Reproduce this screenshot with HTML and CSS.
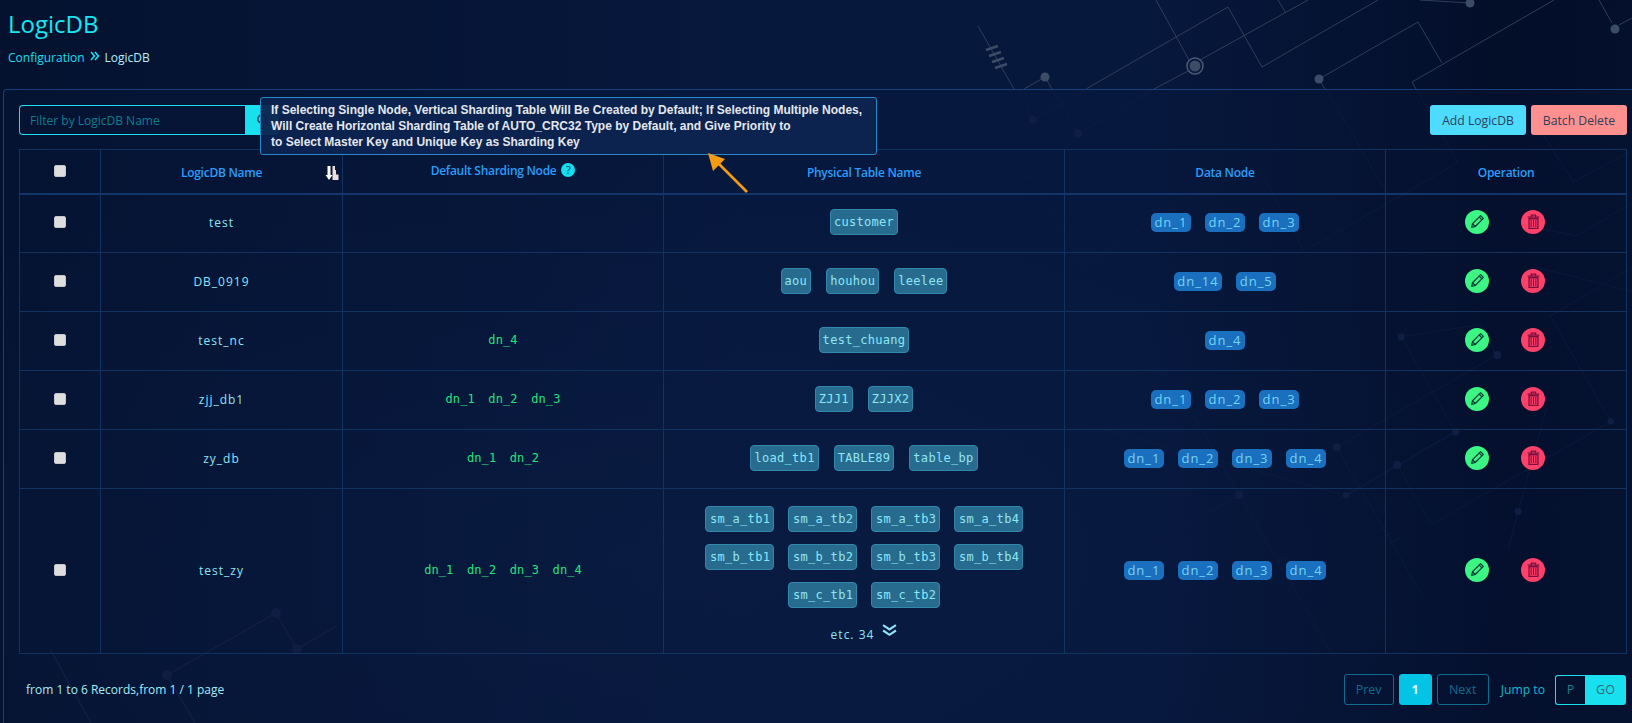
FILE: index.html
```html
<!DOCTYPE html>
<html lang="en">
<head>
<meta charset="utf-8">
<title>LogicDB</title>
<link rel="stylesheet" href="styles.css">
</head>
<body>
<svg class="backdrop" viewBox="0 0 1632 723" aria-hidden="true">
  <g class="wire">
    <path d="M978 26L1014 89M1045 77L1024 89M1045 77L1052 89"/>
    <path d="M1086 89L1228 7L1262 67L1378 0"/>
    <path d="M1156 0L1189 60M1200 60L1308 0M1190 70L1154 89"/>
    <path d="M1278 0L1286 13M1319 79L1418 22L1442 63M1319 79L1325 89"/>
    <path d="M1554 0L1412 82L1416 89M1470 3L1420 0M1599 0L1612 23M1619 25L1632 18"/>
  </g>
  <g class="solder">
    <circle cx="1045" cy="77" r="4.5"/><circle cx="1195" cy="66" r="5.5"/><circle cx="1319" cy="79" r="4.5"/><circle cx="1470" cy="3" r="4.5"/><circle cx="1615" cy="29" r="4.5"/>
  </g>
  <circle class="ring" cx="1195" cy="66" r="8"/>
  <path class="coil" d="M986 50L998 46M989 56L1001 52M992 62L1004 58M995 68L1007 64"/>
  <g class="wire-faint" transform="translate(1000 90) scale(.4032)">
    <path d="M45 0L82 74L210 0M130 0L193 108L380 0M810 0L955 250M1035 0L1135 180M1340 100L1422 228L1568 150"/>
    <path d="M0 260L75 212L208 437L560 200M640 190L755 400L1135 180M1350 345L1428 362L1568 280M1330 440L1568 500"/>
    <path d="M995 612L1130 848L835 1020M995 612L1190 582L1233 657L835 886L1050 1260"/>
    <path d="M473 795L820 1395M593 1005L405 1110M250 840L858 1005L1140 840M985 930L1070 1078L1515 822L1365 560L1568 440"/>
    <path d="M1355 790L1285 1045L1260 1140"/>
    <path d="M945 1090L960 1082M955 1108L975 1096M965 1126L990 1112M685 1170L705 1158M695 1190L715 1178"/>
  </g>
  <g class="solder-faint" transform="translate(1000 90) scale(.4032)">
    <circle cx="82" cy="74" r="10"/><circle cx="193" cy="108" r="11"/><circle cx="995" cy="612" r="9"/><circle cx="1233" cy="657" r="10"/><circle cx="1130" cy="848" r="9"/><circle cx="835" cy="886" r="10"/><circle cx="593" cy="1005" r="10"/><circle cx="858" cy="1005" r="8"/><circle cx="985" cy="930" r="10"/><circle cx="1515" cy="822" r="8"/><circle cx="1285" cy="1045" r="9"/>
  </g>
  <g class="wire-faint"><path d="M167 675L276 613L297 649L337 626M50 649L91 723M167 675L195 723"/></g>
  <g class="solder-faint"><circle cx="276" cy="613" r="5"/><circle cx="297" cy="649" r="5"/><circle cx="167" cy="675" r="5"/></g>
</svg>

<svg class="defs" aria-hidden="true">
  <symbol id="pencil" viewBox="0 0 16 16"><path d="M2.500 13.500l.8-3.400 7.600-7.600 2.600 2.600-7.600 7.600zM3.300 10.100l2.600 2.600M9.600 3.800l2.600 2.600" fill="none" stroke="currentColor" stroke-width="1.100" stroke-linejoin="round"/></symbol>
  <symbol id="trash" viewBox="0 0 16 16"><path d="M2.500 3.800h11M6 3.600V2h4v1.600M3.800 5.400h8.400v9H3.800z" fill="none" stroke="currentColor" stroke-width="1.200"/><path d="M5.800 6.600v6.600M8 6.600v6.600M10.200 6.600v6.600" stroke="currentColor" stroke-width="1"/></symbol>
</svg>

<header class="page-head">
  <h1 class="page-title">LogicDB</h1>
  <nav class="crumbs">
    <a class="crumb-link">Configuration</a>
    <svg class="crumb-sep" viewBox="0 0 10 10"><path d="M1 1l3.400 4L1 9M5 1l3.400 4L5 9" fill="none" stroke="currentColor" stroke-width="1.600"/></svg>
    <span class="crumb-now">LogicDB</span>
  </nav>
</header>

<main class="panel">
  <div class="toolbar">
    <div class="search">
      <input class="search-input" placeholder="Filter by LogicDB Name">
      <button class="search-btn"><svg viewBox="0 0 14 14" class="search-icon"><circle cx="6" cy="6" r="4.200" fill="none" stroke="currentColor" stroke-width="1.700"/><path d="M9.200 9.200l3.600 3.600" stroke="currentColor" stroke-width="1.900"/></svg></button>
    </div>
    <div class="actions">
      <button class="btn btn-add">Add LogicDB</button>
      <button class="btn btn-del">Batch Delete</button>
    </div>
  </div>

  <table class="grid">
    <colgroup><col class="c-check"><col class="c-name"><col class="c-default"><col class="c-phys"><col class="c-node"><col class="c-op"></colgroup>
    <thead>
      <tr>
        <th><input type="checkbox" class="check"></th>
        <th class="th-sort">LogicDB Name
          <svg class="sort" viewBox="0 0 14 14"><path d="M2.500 0h3v9H7.500L4 14 .5 9h2z" fill="#fff"/><path d="M7.500 0h2.500v4H7.500zM7.500 4h3.500v4.500H7.500zM7.500 8.500H13.500V14H7.500z" fill="#ecdfe2"/></svg>
        </th>
        <th class="th-raise">Default Sharding Node <span class="help">?</span></th>
        <th>Physical Table Name</th>
        <th>Data Node</th>
        <th>Operation</th>
      </tr>
    </thead>
    <tbody>
      <tr>
        <td><input type="checkbox" class="check"></td><td class="name">test</td><td></td>
        <td><div class="tags"><span class="tbl">customer</span></div></td>
        <td><div class="nodes"><span class="dn">dn_1</span><span class="dn">dn_2</span><span class="dn">dn_3</span></div></td>
        <td><div class="ops"><span class="op op-edit"><svg><use href="#pencil"/></svg></span><span class="op op-del"><svg><use href="#trash"/></svg></span></div></td>
      </tr>
      <tr>
        <td><input type="checkbox" class="check"></td><td class="name">DB_0919</td><td></td>
        <td><div class="tags"><span class="tbl">aou</span><span class="tbl">houhou</span><span class="tbl">leelee</span></div></td>
        <td><div class="nodes"><span class="dn">dn_14</span><span class="dn">dn_5</span></div></td>
        <td><div class="ops"><span class="op op-edit"><svg><use href="#pencil"/></svg></span><span class="op op-del"><svg><use href="#trash"/></svg></span></div></td>
      </tr>
      <tr>
        <td><input type="checkbox" class="check"></td><td class="name">test_nc</td>
        <td><div class="defaults"><span>dn_4</span></div></td>
        <td><div class="tags"><span class="tbl">test_chuang</span></div></td>
        <td><div class="nodes"><span class="dn">dn_4</span></div></td>
        <td><div class="ops"><span class="op op-edit"><svg><use href="#pencil"/></svg></span><span class="op op-del"><svg><use href="#trash"/></svg></span></div></td>
      </tr>
      <tr>
        <td><input type="checkbox" class="check"></td><td class="name">zjj_db1</td>
        <td><div class="defaults"><span>dn_1</span><span>dn_2</span><span>dn_3</span></div></td>
        <td><div class="tags"><span class="tbl">ZJJ1</span><span class="tbl">ZJJX2</span></div></td>
        <td><div class="nodes"><span class="dn">dn_1</span><span class="dn">dn_2</span><span class="dn">dn_3</span></div></td>
        <td><div class="ops"><span class="op op-edit"><svg><use href="#pencil"/></svg></span><span class="op op-del"><svg><use href="#trash"/></svg></span></div></td>
      </tr>
      <tr>
        <td><input type="checkbox" class="check"></td><td class="name">zy_db</td>
        <td><div class="defaults"><span>dn_1</span><span>dn_2</span></div></td>
        <td><div class="tags"><span class="tbl">load_tb1</span><span class="tbl">TABLE89</span><span class="tbl">table_bp</span></div></td>
        <td><div class="nodes"><span class="dn">dn_1</span><span class="dn">dn_2</span><span class="dn">dn_3</span><span class="dn">dn_4</span></div></td>
        <td><div class="ops"><span class="op op-edit"><svg><use href="#pencil"/></svg></span><span class="op op-del"><svg><use href="#trash"/></svg></span></div></td>
      </tr>
      <tr>
        <td><input type="checkbox" class="check"></td><td class="name">test_zy</td>
        <td><div class="defaults"><span>dn_1</span><span>dn_2</span><span>dn_3</span><span>dn_4</span></div></td>
        <td class="td-many">
          <div class="tags tags-many">
            <span class="tbl">sm_a_tb1</span><span class="tbl">sm_a_tb2</span><span class="tbl">sm_a_tb3</span><span class="tbl">sm_a_tb4</span>
            <span class="tbl">sm_b_tb1</span><span class="tbl">sm_b_tb2</span><span class="tbl">sm_b_tb3</span><span class="tbl">sm_b_tb4</span>
            <span class="tbl">sm_c_tb1</span><span class="tbl">sm_c_tb2</span>
          </div>
          <div class="more">etc. 34 <svg class="more-icon" viewBox="0 0 14 12"><path d="M1 1l6 4 6-4M1 6l6 4 6-4" fill="none" stroke="currentColor" stroke-width="2"/></svg></div>
        </td>
        <td><div class="nodes"><span class="dn">dn_1</span><span class="dn">dn_2</span><span class="dn">dn_3</span><span class="dn">dn_4</span></div></td>
        <td><div class="ops"><span class="op op-edit"><svg><use href="#pencil"/></svg></span><span class="op op-del"><svg><use href="#trash"/></svg></span></div></td>
      </tr>
    </tbody>
  </table>

  <footer class="foot">
    <span class="records">from 1 to 6 Records,from 1 / 1 page</span>
    <div class="pager">
      <a class="pg pg-prev">Prev</a>
      <a class="pg pg-cur">1</a>
      <a class="pg pg-next">Next</a>
      <span class="jump">Jump to</span>
      <div class="goto"><span class="goto-p">P</span><span class="goto-btn">GO</span></div>
    </div>
  </footer>

  <div class="tooltip">If Selecting Single Node, Vertical Sharding Table Will Be Created by Default; If Selecting Multiple Nodes,<br>Will Create Horizontal Sharding Table of AUTO_CRC32 Type by Default, and Give Priority to<br>to Select Master Key and Unique Key as Sharding Key</div>
  <svg class="callout" viewBox="0 0 50 46"><path d="M42 39L12 9" stroke="#f39c12" stroke-width="2.600"/><path d="M3 0L20 6L8 18z" fill="#f39c12"/></svg>
</main>
</body>
</html>
```
FILE: styles.css
```css
* { box-sizing: border-box; }
html, body { margin: 0; height: 723px; overflow: hidden; }
body {
  position: relative;
  font-family: "Open Sans", "Noto Sans", sans-serif;
  font-size: 13px;
  color: #8fe3f5;
  background:
    radial-gradient(ellipse 900px 420px at 620px 560px, rgba(12, 30, 70, .45), rgba(12, 30, 70, 0) 100%),
    linear-gradient(90deg, #04122f 0%, #07183d 45%, #07183d 70%, #030e29 92%, #04102c 100%);
}
.backdrop { position: absolute; left: 0; top: 0; width: 1632px; height: 723px; }
.defs { position: absolute; width: 0; height: 0; }
.wire path { fill: none; stroke: #2f3e58; stroke-width: 1; }
.solder circle { fill: #3d4c66; }
.ring { fill: none; stroke: #4b5a74; stroke-width: 1.500; }
.coil { fill: none; stroke: #3d4c66; stroke-width: 2.500; }
.wire-faint path { fill: none; stroke: #101f42; stroke-width: 1.600; }
.solder-faint circle { fill: #101f42; }

.page-head { position: relative; height: 89px; padding: 7px 0 0 8px; }
.page-title { margin: 0; font-size: 24px; line-height: 33px; font-weight: 400; color: #19e6f2; }
.crumbs { display: flex; align-items: center; gap: 5px; margin-top: 9px; line-height: 18px; font-size: 12px; }
.crumb-link { color: #19dff0; }
.crumb-sep { width: 10px; height: 10px; color: #19dff0; margin-top: -4px; }
.crumb-now { color: #b4eef8; }

.panel {
  position: relative;
  margin-left: 3px;
  height: 640px;
  padding: 15px 5px 0 15px;
  border: 1px solid #17407c;
  border-right: 0;
  border-bottom: 0;
  border-radius: 4px 0 0 0;
  background: rgba(10, 28, 66, .18);
}
.toolbar { display: flex; justify-content: space-between; height: 30px; }
.search { display: flex; width: 260px; height: 30px; }
.search-input {
  width: 226px; height: 30px; padding: 0 10px;
  font: 12px "Open Sans", sans-serif;
  color: #8fe3f5;
  background: transparent;
  border: 1px solid #19dff0;
  border-right: 0;
  border-radius: 4px 0 0 4px;
  outline: none;
}
.search-input::placeholder { color: #0f7e8e; opacity: 1; }
.search-btn { width: 34px; height: 30px; padding: 0 0 0 11px; border: 0; border-radius: 0 4px 4px 0; background: #19e0ee; color: #0d5a6a; }
.search-icon { display: block; width: 14px; height: 14px; }
.actions { display: flex; gap: 5px; }
.btn { width: 96px; height: 30px; padding: 0; border: 0; border-radius: 3px; font: 12.200px "Open Sans", sans-serif; color: #2f3f58; }
.btn-add { background: #4ddcff; }
.btn-del { background: #ff9090; }

.grid { width: 1607px; margin-top: 14px; border-collapse: collapse; table-layout: fixed; }
.c-check { width: 81px; }
.c-name { width: 242px; }
.c-default { width: 321px; }
.c-phys { width: 401px; }
.c-node { width: 321px; }
.c-op { width: 241px; }
.grid th, .grid td { border: 1px solid #12325f; padding: 0; text-align: center; vertical-align: middle; }
.grid td { padding-bottom: 2px; }
.grid th { height: 44px; padding-top: 3px; border-bottom: 2px solid #14356a; font-size: 12px; letter-spacing: -.270px; font-weight: 600; color: #2a9dfb; }
.grid tbody tr { height: 59px; }
.th-sort { position: relative; }
.sort { position: absolute; right: 3px; top: 16px; width: 14px; height: 14px; }
.th-raise { padding-bottom: 4px !important; }
.help { display: inline-block; width: 14px; height: 14px; margin-left: 2px; border-radius: 50%; background: #12e0ee; color: #06304f; font-size: 11px; line-height: 14px; font-weight: 400; vertical-align: 1px; }
.check {
  appearance: none; display: block; width: 12px; height: 12px; margin: 0 auto;
  background: #dedede; border: 1px solid #c4c6cb; border-radius: 2px;
}
.grid th .check { margin-top: -3px; }
.name { font-size: 12px; letter-spacing: 1px; color: #8fe3f5; }
.defaults { display: flex; justify-content: center; gap: 13.500px; margin-top: -1px; font: 12px "DejaVu Sans Mono", monospace; letter-spacing: .100px; color: #25e27a; }
.tags { display: flex; flex-wrap: wrap; justify-content: center; gap: 12px 15px; }
.tbl {
  height: 26px; padding: 0 3px;
  font: 12px/24px "DejaVu Sans Mono", monospace; letter-spacing: .300px;
  color: #8fe6f5;
  background: #276b8f;
  border: 1px solid #3288ac;
  border-radius: 4px;
}
.grid .td-many { padding: 17px 0 0; }
.tags-many { width: 345px; margin: 0 auto; gap: 12px 14px; }
.tags-many .tbl { width: 69px; padding: 0 4px; }
.more { display: flex; justify-content: center; align-items: flex-start; gap: 8px; margin-top: 17px; height: 28px; font-size: 12px; letter-spacing: 1px; line-height: 20px; }
.more-icon { width: 15px; height: 13px; margin-top: -1px; }
.nodes { display: flex; justify-content: center; gap: 14px; }
.dn { height: 19px; padding: 0 3.500px; font-size: 13px; line-height: 19px; letter-spacing: 1px; color: #75d4f2; background: #1a6fbe; border-radius: 5px; }
.ops { display: flex; justify-content: center; gap: 32px; margin-top: -1px; padding-right: 2px; }
.op { display: flex; align-items: center; justify-content: center; width: 24px; height: 24px; border-radius: 50%; }
.op svg { width: 17px; height: 17px; }
.op-edit { background: #3df582; color: #0c3a3a; }
.op-del { background: #ff4069; color: #7a1040; }

.foot { display: flex; justify-content: space-between; align-items: flex-start; width: 1607px; padding-top: 20px; }
.records { padding: 6px 0 0 7px; font-size: 12px; line-height: 20px; color: #a5ecf7; }
.pager { display: flex; align-items: center; height: 31px; }
.pg { display: block; height: 31px; margin-right: 5px; border: 1px solid #0f6c8e; border-radius: 3px; text-align: center; line-height: 29px; font-size: 12.500px; color: #0f6c8e; }
.pg-prev { width: 50px; }
.pg-cur { width: 33px; background: #04c4e6; border-color: #04c4e6; color: #e8fbff; font-weight: 700; }
.pg-next { width: 52px; margin-right: 0; }
.jump { margin: 0 10px 0 12px; font-size: 12.200px; color: #11b9cc; }
.goto { display: flex; height: 30px; margin-top: 1px; }
.goto-p { width: 30px; border: 1px solid #19dff0; border-right: 0; border-radius: 3px 0 0 3px; text-align: center; line-height: 28px; font-size: 12.500px; color: #0f7e8e; }
.goto-btn { width: 41px; background: #19e0ee; border-radius: 0 3px 3px 0; text-align: center; line-height: 30px; font-size: 12.500px; color: #2f6a78; }

.tooltip {
  position: absolute; left: 256px; top: 7px;
  width: 617px; height: 58px; padding: 4px 10px;
  font: bold 12px/16px "Liberation Sans", Arial, sans-serif;
  color: #e4e8ee;
  background: rgba(13, 35, 80, .95);
  border: 1px solid #2b86c6;
  border-radius: 3px;
  white-space: nowrap;
}
.callout { position: absolute; left: 701px; top: 63px; width: 50px; height: 46px; }
```
